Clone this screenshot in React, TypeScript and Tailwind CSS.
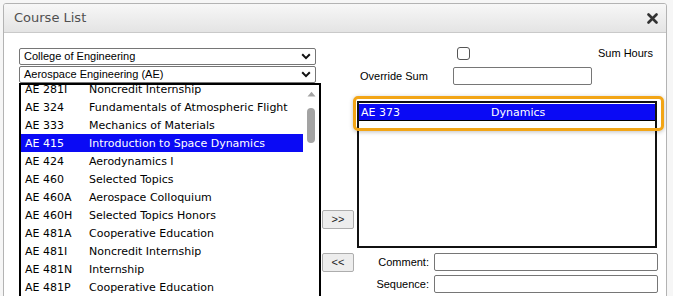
import React from 'react'

const courses = [
  { code: 'AE 281I', title: 'Noncredit Internship' },
  { code: 'AE 324', title: 'Fundamentals of Atmospheric Flight' },
  { code: 'AE 333', title: 'Mechanics of Materials' },
  { code: 'AE 415', title: 'Introduction to Space Dynamics', selected: true },
  { code: 'AE 424', title: 'Aerodynamics I' },
  { code: 'AE 460', title: 'Selected Topics' },
  { code: 'AE 460A', title: 'Aerospace Colloquium' },
  { code: 'AE 460H', title: 'Selected Topics Honors' },
  { code: 'AE 481A', title: 'Cooperative Education' },
  { code: 'AE 481I', title: 'Noncredit Internship' },
  { code: 'AE 481N', title: 'Internship' },
  { code: 'AE 481P', title: 'Cooperative Education' },
  { code: 'AE 490', title: 'Independent Study' },
]

function Chevron() {
  return (
    <svg width="10" height="7" viewBox="0 0 10 7" className="shrink-0">
      <path d="M1.2 1.3 L5 5.1 L8.8 1.3" fill="none" stroke="#111" strokeWidth="2" />
    </svg>
  )
}

function FakeSelect({ label }: { label: string }) {
  return (
    <div className="flex h-[17px] w-[297px] items-center justify-between rounded-[2px] border border-[#767676] bg-white pl-[4px] pr-[4px] font-['Liberation_Sans',Arial,sans-serif] text-[11px] leading-none text-black">
      <span>{label}</span>
      <Chevron />
    </div>
  )
}

function SmallButton({ label }: { label: string }) {
  return (
    <div className="flex h-[19px] w-[32px] items-center justify-center rounded-[2px] border border-[#adadad] bg-[#ededed] font-['Liberation_Sans',Arial,sans-serif] text-[11px] leading-none text-[#222]">
      {label}
    </div>
  )
}

function TextField({ className }: { className: string }) {
  return <div className={`h-[18px] rounded-[2px] border border-[#767676] bg-white ${className}`} />
}

export default function App() {
  return (
    <div className="relative h-[296px] w-[673px] overflow-hidden bg-[#f6f6f6]">
      <div className="ml-[3px] mt-[3px] h-[310px] w-[664px] overflow-hidden rounded-t-[3px] border border-[#b3b3b3] bg-white">
        {/* Title bar */}
        <div className="flex h-[29px] items-center justify-between border-b border-[#c9c9c9] bg-gradient-to-b from-[#f7f7f7] to-[#e4e4e4] pl-[10px] pr-[8px]">
          <span className="font-['DejaVu_Sans',Verdana,sans-serif] text-[13px] text-[#505050]">Course List</span>
          <svg width="11" height="11" viewBox="0 0 11 11" className="mt-[1px]">
            <path d="M1.5 1.5 L9.5 9.5 M9.5 1.5 L1.5 9.5" stroke="#333" strokeWidth="2.6" strokeLinecap="round" />
          </svg>
        </div>

        {/* Body */}
        <div className="flex pl-[15px]">
          {/* Left: department pickers + course list */}
          <div className="flex w-[302px] flex-col pt-[15px]">
            <FakeSelect label="College of Engineering" />
            <div className="mt-[1px]">
              <FakeSelect label="Aerospace Engineering (AE)" />
            </div>
            <div className="flex h-[240px] w-[302px] overflow-hidden border-2 border-black bg-white">
              <div className="-mt-[5px] w-[282px] font-['DejaVu_Sans',Verdana,sans-serif] text-[11px] leading-none">
                {courses.map((c) => (
                  <div
                    key={c.code}
                    className={`flex h-[18px] items-center pl-[4px] ${c.selected ? 'bg-[#0a0af5] text-white' : 'text-black'}`}
                  >
                    <span className="w-[64px] shrink-0">{c.code}</span>
                    <span className="whitespace-nowrap">{c.title}</span>
                  </div>
                ))}
              </div>
              <div className="flex w-[16px] flex-col items-center pt-[6px]">
                <svg width="9" height="6" viewBox="0 0 9 6">
                  <path d="M0.5 5.5 L4.5 0.8 L8.5 5.5 Z" fill="#a3a3a3" />
                </svg>
                <div className="mt-[11px] h-[35px] w-[8px] rounded-full bg-[#a3a3a3]" />
              </div>
            </div>
          </div>

          {/* Middle: move buttons */}
          <div className="flex w-[36px] flex-col pl-[1px] pt-[177px]">
            <SmallButton label=">>" />
            <div className="mt-[24px]">
              <SmallButton label="<<" />
            </div>
          </div>

          {/* Right: options + selected list */}
          <div className="flex w-[302px] flex-col pt-[13px] font-['Liberation_Sans',Arial,sans-serif] text-[11px] text-black">
            <div className="flex h-[14px] items-center">
              <div className="ml-[100px] h-[13px] w-[13px] rounded-[3px] border border-[#555] bg-white" />
              <span className="ml-auto mr-[6px]">Sum Hours</span>
            </div>
            <div className="mt-[7px] flex items-center">
              <span className="w-[96px] pl-[3px]">Override Sum</span>
              <TextField className="w-[139px]" />
            </div>
            <div className="relative mt-[16px] h-[147px] w-[300px] border-2 border-[#111] bg-white">
              <div className="mt-[1px] flex h-[17px] items-center border-b border-black bg-[#0a0af5] pl-[2px] font-['DejaVu_Sans',Verdana,sans-serif] leading-none text-white">
                <span className="w-[130px] shrink-0">AE 373</span>
                <span>Dynamics</span>
              </div>
              <div className="pointer-events-none absolute -left-[6px] -top-[7px] h-[35px] w-[311px] rounded-[5px] border-[3px] border-[#f2a516] shadow-[0_1px_4px_rgba(0,0,0,0.25)]" />
            </div>
            <div className="mt-[5px] flex items-center">
              <span className="w-[77px] pr-[5px] text-right">Comment:</span>
              <TextField className="w-[224px]" />
            </div>
            <div className="mt-[4px] flex items-center">
              <span className="w-[77px] pr-[5px] text-right">Sequence:</span>
              <TextField className="w-[224px]" />
            </div>
          </div>
        </div>
      </div>
    </div>
  )
}
